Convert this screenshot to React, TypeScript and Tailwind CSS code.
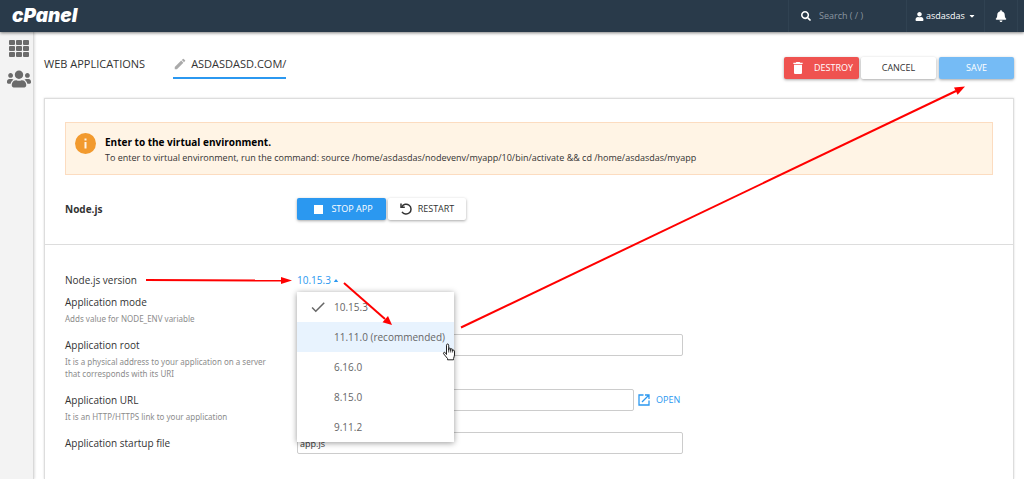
import { useState } from "react";
import { FaBell, FaCaretDown, FaSearch, FaUser, FaUsers } from "react-icons/fa";
import { MdCheck, MdDelete, MdEdit } from "react-icons/md";

const versions = ["10.15.3", "11.11.0 (recommended)", "6.16.0", "8.15.0", "9.11.2"];

function Header() {
  return (
    <header className="relative z-10 flex h-8 items-stretch bg-[#293a4a] pr-1.5 text-white shadow-[0_1px_3px_rgba(0,0,0,0.5)]">
      <a href="#" className="flex items-center pl-3 font-['Inter',sans-serif] text-[19px] leading-5 font-black italic">
        cPanel
      </a>
      <div className="ml-auto flex w-[118px] items-center gap-2 border-l border-[#304252] pl-3">
        <FaSearch className="size-2.5 shrink-0" />
        <input
          aria-label="Search"
          placeholder="Search ( / )"
          className="w-full min-w-0 bg-transparent text-[9px] leading-4 outline-none placeholder:text-[#8b96a0]"
        />
      </div>
      <button className="flex w-[78px] items-center border-l border-[#304252] pl-2 text-[9px]">
        <FaUser className="mr-0.5 size-[9px]" />
        asdasdas
        <FaCaretDown className="ml-auto mr-2 size-2" />
      </button>
      <button aria-label="Notifications" className="flex w-[34px] items-center justify-center border-x border-[#304252]">
        <FaBell className="size-3" />
      </button>
    </header>
  );
}

function Sidebar() {
  return (
    <nav className="flex w-[34px] shrink-0 flex-col items-center gap-3 border-r border-[#d9d9d9] bg-[#f3f3f3] pt-2 pl-1 text-[#6b6b6b] shadow-[1px_0_2px_rgba(0,0,0,0.12)]">
      <a href="#" aria-label="Tools">
        <svg viewBox="0 0 20 17" className="h-[17px] w-5" fill="currentColor">
          {[0, 6, 12].map((y) =>
            [0, 7, 14].map((x) => <rect key={x + "-" + y} x={x} y={y} width="6" height="5" rx="1" />)
          )}
        </svg>
      </a>
      <a href="#" aria-label="User manager">
        <FaUsers className="h-5 w-6" />
      </a>
    </nav>
  );
}

function Field({ id, label, help, children }: { id?: string; label: string; help?: string; children?: any }) {
  return (
    <div className="mb-[9px] flex items-start">
      <div className="w-[232px] shrink-0">
        <label htmlFor={id} className="block text-[10px] leading-[22px] text-[#333]">
          {label}
        </label>
        {help && <p className="w-[212px] font-['Noto_Sans',sans-serif] text-[8px] leading-3 text-[#8c8c8c]">{help}</p>}
      </div>
      {children}
    </div>
  );
}

function VersionMenu() {
  const [open, setOpen] = useState(true);
  const [selected, setSelected] = useState(versions[0]);

  return (
    <div className="relative">
      <button
        id="version"
        aria-haspopup="listbox"
        aria-expanded={open}
        onClick={() => setOpen(!open)}
        className="flex h-[22px] items-center gap-0.5 text-[10px] text-[#2b98f0]"
      >
        {selected}
        <svg viewBox="0 0 6 4" className="h-[3px] w-1.5" fill="currentColor">
          <path d="M0 4 3 0l3 4z" />
        </svg>
      </button>
      {open && (
        <div role="listbox" aria-label="Node.js version" className="absolute top-[23px] left-0 z-10 w-[157px] bg-white shadow-[0_1px_6px_rgba(0,0,0,0.4)]">
          {versions.map((v, idx) => (
            <button
              key={v}
              role="option"
              aria-selected={v === selected}
              onClick={() => setSelected(v)}
              className={`flex h-[30px] w-full items-center text-[10px] whitespace-nowrap text-[#666] hover:bg-[#e8f3fe] ${idx === 1 ? "bg-[#e8f3fe]" : ""}`}
            >
              <span className="flex w-[37px] shrink-0 justify-center pl-1">
                {v === selected && <MdCheck className="size-[18px]" />}
              </span>
              {v}
            </button>
          ))}
          <svg viewBox="0 0 14 18" className="pointer-events-none absolute top-[51px] left-[145px] h-[18px] w-3.5">
            <path
              d="M4.500 11.500V2.200c0-1.600 2.200-1.600 2.200 0v5V6c0-1.200 1.900-1.200 2 0v1.500-.9c0-1.100 1.800-1.100 1.900 0V8c0-1.100 1.800-1.100 1.900.1V12c0 1.600-.8 2.300-1 3.500v1.300H5.500v-1.300L1.700 10.900c-.8-1.200.6-2.100 1.500-1.300z"
              fill="#fff"
              stroke="#222"
              strokeWidth="1"
              strokeLinejoin="round"
            />
            <path d="M6.700 6v3.500M8.700 7v2.500M10.600 7.500v2" stroke="#222" strokeWidth="0.8" />
          </svg>
        </div>
      )}
    </div>
  );
}

// pointers that lead from the version field to the save button
function Arrows() {
  return (
    <svg viewBox="0 0 1024 479" className="pointer-events-none absolute top-0 left-0 z-20 h-[479px] w-[1024px]" fill="#f00" stroke="#f00">
      <g strokeWidth="2">
        <path d="M146 280 284 280.500" />
        <path d="M344 283 385 319" />
        <path d="M461 327.500 956 91" />
      </g>
      <g stroke="none">
        <path d="M292 280.500 281 277v7z" />
        <path d="M392 325 388 316l-5.500 6.300z" />
        <path d="M965 86.500 954 87.500l3.600 7.300z" />
      </g>
    </svg>
  );
}

export default function App() {
  const button = "flex h-[22px] items-center justify-center rounded-xs text-[9px] shadow-[0_1px_3px_rgba(0,0,0,0.35)]";
  const input = "h-[22px] rounded-xs border border-[#ccc] bg-white px-0.5 text-[9px] text-[#333] outline-none";

  return (
    <div className="relative flex min-h-screen flex-col overflow-hidden bg-white font-['Open_Sans',sans-serif]">
      <Header />
      <div className="flex flex-1">
        <Sidebar />
        <main className="flex min-w-0 flex-1 flex-col px-2.5">
          <div className="flex h-[66px] items-start pt-[25px] text-[#333]">
            <a href="#" className="pt-px text-[11px] leading-3">
              WEB APPLICATIONS
            </a>
            <a href="#" className="ml-7 flex items-center border-b-2 border-[#2b98f0] pb-1.5 text-[11px] leading-3">
              <MdEdit className="mr-1 size-3.5 text-[#aaa]" />
              ASDASDASD.COM/
            </a>
            <div className="ml-auto flex">
              <button className={`${button} w-[75px] gap-2 bg-[#ef5350] text-white`}>
                <MdDelete className="size-4" />
                DESTROY
              </button>
              <button className={`${button} ml-0.5 w-[75px] bg-white`}>CANCEL</button>
              <button className={`${button} ml-[3px] w-[75px] bg-[#75bbf5] text-white`}>SAVE</button>
            </div>
          </div>

          <section className="flex-1 border border-b-0 border-[#ddd] shadow-[0_0_2px_rgba(0,0,0,0.15)]">
            <div className="px-5 pt-[23px]">
              <div className="flex h-[53px] gap-[9px] border border-[#fcdcc0] bg-[#fff4e5] pt-2.5 pl-[9px]">
                <svg viewBox="0 0 21 21" className="size-[21px]">
                  <circle cx="10.500" cy="10.500" r="10.500" fill="#f29a2e" />
                  <path d="M9.500 5.500h2v2h-2zM9.500 9h2v6.500h-2z" fill="#fff4e5" />
                </svg>
                <div>
                  <h2 className="pt-px text-[10px] leading-4 font-bold text-black">Enter to the virtual environment.</h2>
                  <p className="text-[9px] leading-4 text-[#333]">
                    To enter to virtual environment, run the command: source /home/asdasdas/nodevenv/myapp/10/bin/activate &amp;&amp; cd /home/asdasdas/myapp
                  </p>
                </div>
              </div>
            </div>

            <div className="flex items-center px-5 pt-[23px] pb-6">
              <h3 className="w-[232px] text-[10px] font-bold text-[#333]">Node.js</h3>
              <div className="flex gap-0.5">
                <button className={`${button} w-[89px] gap-2 bg-[#2b98f0] pl-1 text-white`}>
                  <span className="size-[9px] bg-white" />
                  STOP APP
                </button>
                <button className={`${button} w-[78px] gap-1.5 bg-white text-[#333]`}>
                  <svg viewBox="0 0 12 12" className="size-3" fill="none" stroke="currentColor" strokeWidth="1.500">
                    <path d="M1.800 3.800A4.900 4.900 0 1 1 2 8.800" />
                    <path d="M1 .6v3.700h3.800" />
                  </svg>
                  RESTART
                </button>
              </div>
            </div>

            <div className="border-t border-[#ddd] px-5 pt-6">
              <div className="-mb-[9px]">
                <Field id="version" label="Node.js version">
                  <VersionMenu />
                </Field>
              </div>
              <Field label="Application mode" help="Adds value for NODE_ENV variable" />
              <Field id="root" label="Application root" help="It is a physical address to your application on a server that corresponds with its URI">
                <input id="root" className={`${input} w-[386px]`} />
              </Field>
              <Field id="url" label="Application URL" help="It is an HTTP/HTTPS link to your application">
                <input id="url" className={`${input} w-[337px]`} />
                <a href="#" className="ml-1 flex h-[22px] items-center gap-1.5 text-[9px] text-[#2b98f0]">
                  <svg viewBox="0 0 12 12" className="size-3" fill="none" stroke="currentColor" strokeWidth="1.300">
                    <path d="M5.500 1H1v10h10V6.500M7 1h4v4M11 1 4 8" />
                  </svg>
                  OPEN
                </a>
              </Field>
              <Field id="startup" label="Application startup file">
                <input id="startup" defaultValue="app.js" className={`${input} w-[386px]`} />
              </Field>
            </div>
          </section>
        </main>
      </div>
      <Arrows />
    </div>
  );
}
